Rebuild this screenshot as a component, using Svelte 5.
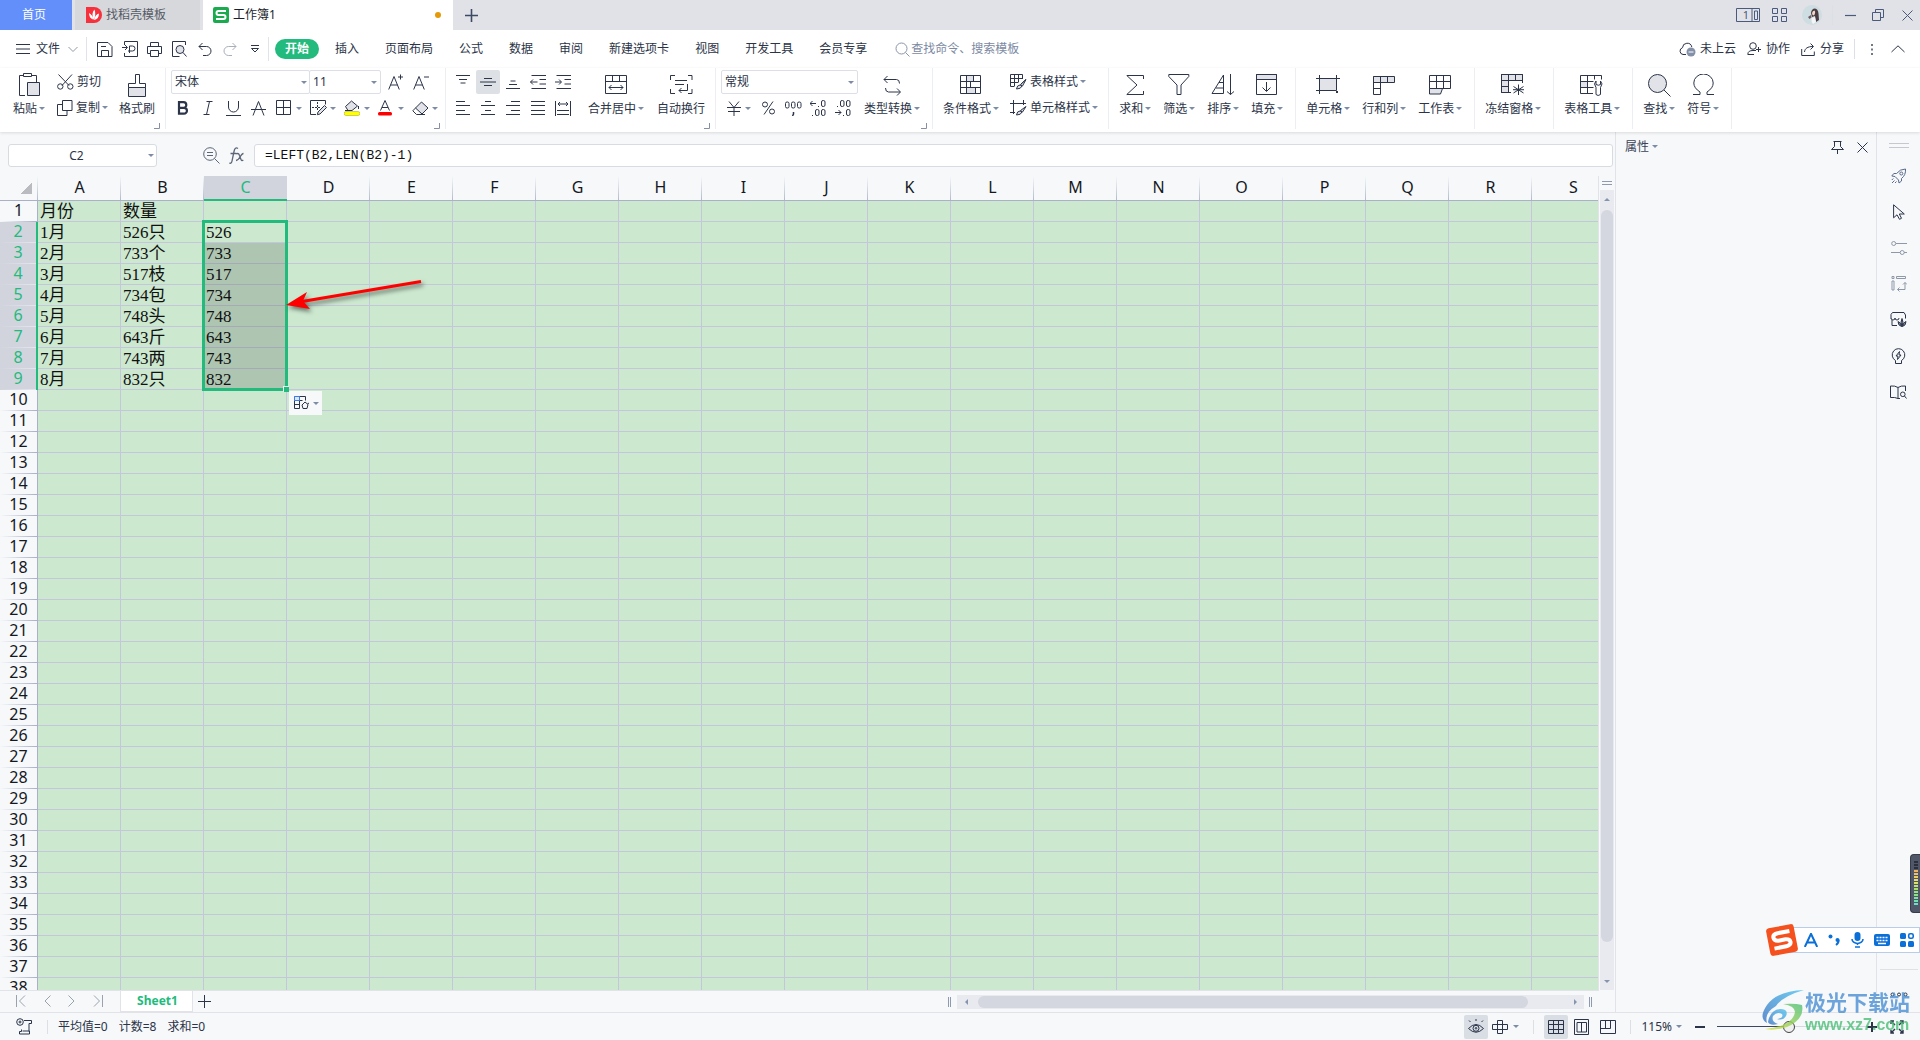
<script>
  const cols = 'ABCDEFGHIJKLMNOPQRS'.split('');
  const rowCount = 38;
  const data = {
    1: ['月份', '数量', ''],
    2: ['1月', '526只', '526'],
    3: ['2月', '733个', '733'],
    4: ['3月', '517枝', '517'],
    5: ['4月', '734包', '734'],
    6: ['5月', '748头', '748'],
    7: ['6月', '643斤', '643'],
    8: ['7月', '743两', '743'],
    9: ['8月', '832只', '832'],
  };
  const rows = Array.from({ length: rowCount }, (_, i) => i + 1);
  const selected = (r) => r >= 2 && r <= 9;

  const menus = ['插入', '页面布局', '公式', '数据', '审阅', '新建选项卡', '视图', '开发工具', '会员专享'];

  let fontName = $state('宋体');
  let fontSize = $state('11');
  let numberFormat = $state('常规');
  let cellName = $state('C2');
  let formula = $state('=LEFT(B2,LEN(B2)-1)');
  let zoom = $state(48);

  const quick = [
    ['save', '保存'],
    ['export', '输出为PDF'],
    ['print', '打印'],
    ['preview', '打印预览'],
    ['undo', '撤销'],
    ['redo', '恢复'],
    ['more', '自定义快速访问工具栏'],
  ];
  const sideIcons = [
    ['rocket', '稻壳资源'],
    ['cursor', '选择'],
    ['sliders', '属性'],
    ['pivot', '透视表'],
    ['shop', '素材库'],
    ['bulb', '技巧'],
    ['book', '帮助'],
  ];
  const alignTop = ['alTop', 'alMid', 'alBot', 'dedent', 'indent'];
  const alignBottom = ['alLeft', 'alCenter', 'alRight', 'alJust', 'alDist'];

  const icons = {
    burger: [14, 10, '<path d="M0 .5h14M0 5h14M0 9.500h14"/>'],
    chevDown: [10, 7, '<path d="M.5 1l4.500 4.500 4.500-4.500" stroke="#9098a6"/>'],
    save: [16, 15, '<path d="M.5.500h10.500l4 4v10H.5zM4.500 14V8.500h7V14M4 4.500h5"/>'],
    export: [16, 16, '<path d="M2.500 4V.5h13v15h-13V12M0 6.500h5M3 4l2.500 2.500L3 9M7.500 12V5h3a2 2 0 010 5H6"/>'],
    print: [15, 15, '<path d="M3.500 4.500v-4h8v4M3.500 11.500h-3v-7h14v7h-3M3.500 8.500h8v6h-8z"/>'],
    preview: [15, 16, '<path d="M13.500 4V.5H.5v15h7"/><circle cx="8" cy="8.500" r="4" fill="#e1e3e8"/><path d="M11 11.500l3.500 4"/>'],
    undo: [14, 14, '<path d="M1 4.500h7.500a4.500 4.500 0 010 9H5M4.500 1L1 4.500 4.500 8"/>'],
    redo: [14, 14, '<path d="M13 4.500H5.500a4.500 4.500 0 000 9H9M9.500 1L13 4.500 9.500 8" stroke="#a9afba"/>'],
    more: [8, 8, '<path d="M0 .5h8M.5 3.500h7L4 7z"/>'],
    search: [15, 15, '<circle cx="6.500" cy="6.500" r="5.500" stroke="#8a96ab"/><path d="M10.500 10.500l4 4" stroke="#8a96ab"/>'],
    cloud: [17, 15, '<path d="M7 12.500H4a3.500 3.500 0 01-.5-6.800 4.700 4.700 0 019.300-.7"/><circle cx="12" cy="10" r="4.500" fill="#8490a8" stroke="none"/><path d="M9.500 10h5" stroke="#fff"/>'],
    people: [15, 14, '<circle cx="6" cy="4" r="3.300"/><path d="M7 12.500H.8c0-3 2-4 5.200-4h3M11.500 5v5M9 7.500h5"/>'],
    share: [15, 13, '<path d="M.7 6v6.500h12.600V8.500M3.500 9c.3-3.500 3-5.500 8.500-5.500M9.500.5l3 3-3 3"/>'],
    dots: [2, 13, '<path d="M1 1v2M1 5.500v2M1 10v2" stroke="#70798a" stroke-width="2"/>'],
    chevUp: [14, 8, '<path d="M.5 7L7 .8 13.500 7"/>'],
    paste: [22, 24, '<path d="M7 22.500H1.500v-20H5M14 2.500h4.500V9M5.500.5h8v3h-8z"/><path d="M9.500 9.500h12v13h-12z" fill="#e1e3e8"/>'],
    cut: [17, 16, '<path d="M1.500.5l10.500 11M15 .5L5 11.500"/><circle cx="3.300" cy="12.500" r="2.700"/><circle cx="13.300" cy="12.500" r="2.700"/>'],
    copy: [16, 16, '<path d="M5.500.5h9.500v10H5.500zM5 4.500H.5v11H10v-5"/>'],
    brush: [19, 25, '<path d="M7.500 10.500V1.500h4v9h6v4h-17v-4z"/><path d="M.5 14.500h17v9H.5z" fill="#e1e3e8"/>'],
    fontUp: [16, 16, '<path d="M.7 15.500L6 2.500l5.300 13M2.500 11h7M12.500.5v5M10 3h5" />'],
    fontDown: [16, 16, '<path d="M.7 15.500L6 2.500l5.300 13M2.500 11h7M11 3h5" />'],
    bold: [12, 14, '<path d="M2 1.200h4.500a2.800 2.800 0 010 5.600H2zM2 6.800h5a2.900 2.900 0 010 5.900H2z" stroke-width="2.200"/>'],
    italic: [10, 14, '<path d="M3.500.5h6M.5 13.500h6M6.500.5l-3 13"/>'],
    underline: [15, 15, '<path d="M2.500 0v6a5 5 0 0010 0V0M0 14.500h15"/>'],
    strikeA: [15, 15, '<path d="M2 14.500L7.500.5 13 14.500M0 8.500h15"/>'],
    border: [16, 16, '<path d="M.5.500h14v14H.5zM7.500.5v14M.5 7.500h14"/>'],
    drawBorder: [17, 16, '<path d="M15.500 4.500v-4H.5v14H6"/><path d="M7.500 2v9M2 7.500h9" stroke-dasharray="2 1"/><path d="M14.500 5.500l2 2-6.500 6.500-2.700.7.700-2.700z" fill="#e1e3e8"/>'],
    fill: [16, 16, '<path d="M1.500 6.500L7.500 1l6 5-5.500 4.500H4z" fill="#e1e3e8"/><path d="M14.500 6v3M1 10.500h4"/><rect x="0" y="11.500" width="16" height="4" rx="2" fill="#ff0" stroke="#9a9a3a" stroke-width=".5"/>'],
    fontColor: [14, 16, '<path d="M2.500 10.500L7 .5l4.500 10M4 7.500h6"/><rect x="0" y="12" width="14" height="3.500" rx="1.500" fill="#f00" stroke="none"/>'],
    eraser: [17, 15, '<path d="M9.500 1L16 7l-6 6L3.500 7z" fill="#e1e3e8"/><path d="M3.500 7L.8 9.800l3.700 3.700H9l1-.5M9 13.500h4"/>'],
    alTop: [14, 14, '<path d="M0 .5h14M3 4.500h8M4.500 8h5"/>'],
    alMid: [16, 14, '<path d="M4 3.500h8M0 7h16M4 10.500h8"/>'],
    alBot: [14, 14, '<path d="M4.500 6h5M3 9.500h8M0 13.500h14"/>'],
    dedent: [16, 14, '<path d="M1.500.5H16M9.500 4.500H16M9.500 9H16M1.500 13.500H16M.5 7h7M3 4.500L.5 7 3 9.500"/>'],
    indent: [16, 14, '<path d="M1.500.5H16M9.500 4.500H16M9.500 9H16M1.500 13.500H16M0 7h6M4 4.500L6.500 7 4 9.500"/>'],
    alLeft: [14, 14, '<path d="M0 .5h9M0 4.500h14M0 9.500h9M0 13.500h14"/>'],
    alCenter: [14, 14, '<path d="M4 .5h6M0 4.500h14M4 9.500h6M0 13.500h14"/>'],
    alRight: [14, 14, '<path d="M5 .5h9M0 4.500h14M5 9.500h9M0 13.500h14"/>'],
    alJust: [14, 14, '<path d="M0 .5h14M0 4.500h14M0 9.500h14M0 13.500h14"/>'],
    alDist: [16, 15, '<path d="M.5 0v15M15.500 0v15M3 3h10M5 1L3 3l2 2M11 1l2 2-2 2M2 9.500h12M2 13.500h12"/>'],
    merge: [23, 20, '<path d="M.5.500h21v18H.5zM.5 6.500h21M7.500.5v6M14.500.5v6M4 12.500h14M6.500 10L4 12.500 6.500 15M15.500 10l2.500 2.500-2.500 2.500"/>'],
    wrap: [23, 20, '<path d="M5 .5H.5V5M18 .5h4V5M5 18.500H.5V14M18 18.500h4V14M5 5.500h12M5 9.500h9M17.500 9v6.500H9M11.500 13L9 15.500l2.500 2.500"/>'],
    convert: [19, 21, '<path d="M4.500 1L1 4.500 4.500 8M1 4.500h12.500q3 0 3 4M14 13.500l3.500 3.500-3.500 3.500M17 17H5.500q-3 0-3-4"/>'],
    yen: [14, 15, '<path d="M2 .5l5 6 5-6M0 6.500h14M1 10.500h12M7 6.500V15"/>'],
    percent: [13, 14, '<circle cx="3" cy="3.500" r="2.500"/><circle cx="10" cy="10.500" r="2.500"/><path d="M11 .5L2 13.500"/>'],
    thousand: [17, 15, '<rect x=".5" y="1" width="3.500" height="6" rx="1.500"/><rect x="6.500" y="1" width="3.500" height="6" rx="1.500"/><rect x="12.500" y="1" width="3.500" height="6" rx="1.500"/><path d="M8.500 11v2l-1 2" stroke-width="1.500"/>'],
    decInc: [16, 17, '<path d="M0 3.500h6M2.500 1L0 3.500 2.500 6M8 6.500h1M2 15.500h1"/><rect x="11.500" y=".5" width="3.500" height="6" rx="1.500"/><rect x="5.500" y="9.500" width="3.500" height="6" rx="1.500"/><rect x="11.500" y="9.500" width="3.500" height="6" rx="1.500"/>'],
    decDec: [16, 17, '<path d="M0 12.500h6M3.500 10L6 12.500 3.500 15M2 6.500h1M8 15.500h1"/><rect x="5.500" y=".5" width="3.500" height="6" rx="1.500"/><rect x="11.500" y=".5" width="3.500" height="6" rx="1.500"/><rect x="11.500" y="9.500" width="3.500" height="6" rx="1.500"/>'],
    cond: [22, 20, '<path d="M6.500.5h7v6h-7zM6.500 12.500h9v6h-9z" fill="#e1e3e8"/><path d="M.5.500h20v18H.5zM.5 6.500h20M.5 12.500h20M6.500.5v18M13.500.5v6M10.500 6.500v6M15.500 12.500v6"/>'],
    tableStyle: [17, 16, '<path d="M4 12.500H.5V.5h12V5M.5 4.500h12M.5 8.500H8M4.500.5v12M8.500.5v8"/><path d="M16 5.500l-5 4.500M16 5.500l-3.500 6.500-2-1.500zM10 11q-3 0-3.500 4 4.500 0 5.500-3z" fill="#e1e3e8"/>'],
    cellStyle: [17, 16, '<path d="M3.500 0v14M0 3.500h16M13.500 0v5M0 12.500h5"/><path d="M16 6.500l-3.500 5.500-2-1.500zM10 11q-3 0-3.500 4 4.500 0 5.500-3z" fill="#e1e3e8"/>'],
    sum: [18, 21, '<path d="M17.500 4V.500H.8L11 10 .8 19.500h16.700V16"/>'],
    filter: [22, 22, '<path d="M.8.500h20v2L13 11v9.500H9V11L.8 2.500z"/>'],
    sort: [24, 22, '<path d="M12.500 1v18.500H1zM8 8.500h4.500M5 14h7.500M19.500 0v20.500M16 17.500l3.500 3 3.500-3"/>'],
    fillDown: [22, 22, '<path d="M.5.500h20v5H.5z" fill="#e1e3e8"/><path d="M.5.500h20v20H.5zM10.500 8v9M6.500 13.500l4 4 4-4"/>'],
    cells: [24, 20, '<path d="M3.500 3.500h17v12h-17z" fill="#e1e3e8"/><path d="M3.500 0v19M20.500 0v13M0 3.500h24M0 15.500h17"/><path d="M20 16h2v2h-2z" fill="#2b3448" stroke="none"/>'],
    rowcol: [22, 19, '<path d="M.5.500h21v6H.5z" fill="#e1e3e8"/><path d="M7.500.5v18h-7V.5M14.500.5v6M.5 6.500h7M.5 12.500h7"/>'],
    sheet: [23, 20, '<path d="M.5 13.500h13l-2 5.500H.5z" fill="#e1e3e8"/><path d="M.5 13.500V.5h21v13zM.5 6.500h21M7.500.5v13M14.500.5v13"/>'],
    freeze: [24, 22, '<path d="M.5.500h21v6h-14v12h-7z" fill="#e1e3e8"/><path d="M.5.500h21v6H.5zM7.500.5v18h-7V.5M14.500.5v6M.5 12.500h7M21.500 6v3M7 18.500h3"/><path d="M17.500 10.500V21M12.500 12.500l10 6.500M22.500 12.500l-10 6.500M12 15.700h11"/>'],
    tools: [24, 21, '<path d="M.5 6.500h7v6h-7z" fill="#e1e3e8"/><path d="M.5.500h21v4M.5.5v18H13M.5 6.500h13M.5 12.500h13M7.500.5v18M14.500.5v4"/><path d="M16 6q-3 2.500 0 6.500v7q2 2 4.500 0v-7q3-4 0-6.500v3.500q-2 1.500-4.500 0z" fill="#fff"/>'],
    find: [23, 23, '<circle cx="9.500" cy="9.500" r="9" fill="#e1e3e8"/><path d="M16 16l6.500 6.500"/>'],
    omega: [21, 22, '<path d="M0 20.500h7v-2.500Q.8 14 .8 9a9.700 9 0 0119.400 0q0 5-6.200 9v2.500h7"/>'],
    corner: [6, 6, '<path d="M5.500 0v5.500H0" stroke="#8790a3"/>'],
    magnify: [17, 17, '<circle cx="7" cy="7" r="6.300"/><path d="M11.500 11.500l5 5M4 5.500h6M4 8.500h6"/>'],
    fx: [16, 17, '<path d="M9 1.500Q6-.5 5 4.500L3 14Q2.500 17 .3 16M1.500 6.500h6M7.500 7q2-1.500 3 1.500l1.500 4q.7 1.800 2.300.5M14.500 6.500q-1.500 0-3.500 3.500t-4 3.500" stroke-width="1.300"/>'],
    pin: [13, 13, '<path d="M2.500.5h8M3.500.5v5L.5 8.500h12l-3-3v-5M6.500 9v4"/>'],
    close: [11, 11, '<path d="M.5.500l10 10M10.500.5l-10 10"/>'],
    plus: [13, 13, '<path d="M6.500 0v13M0 6.500h13"/>'],
    tabPlus: [13, 13, '<path d="M6.500 0v13M0 6.500h13" stroke-width="1.600"/>'],
    box1: [24, 14, '<path d="M.5.500h23v13H.5zM16 .5v13M18.500 3v8.500h3V3z" />'],
    apps: [15, 14, '<path d="M.5.500h5v5h-5zM9.500.5h5v5h-5zM.5 8.500h5v5h-5zM9.500 8.500h5v5h-5z"/>'],
    min: [11, 3, '<path d="M0 1.500h11" stroke-width="1.200"/>'],
    restore: [12, 12, '<path d="M.5 3.500h8v8h-8zM3.500 3.500v-3h8v8h-3"/>'],
    rocket: [16, 16, '<path d="M14.500 1Q9 1 5.500 5.500H2.800L.8 8l3.200.5 3.500 3.500.5 3 2.500-2v-2.500Q15 7 14.500 1zM1 15l2.500-2.500M.8 12l1.500-1.500M4 15l1.500-1.500" stroke="#5a6a8a"/><circle cx="10.300" cy="5.500" r="1.500" stroke="#5a6a8a"/>'],
    cursor: [12, 16, '<path d="M.6.800v13l3.400-3 2.500 4.500 2-1-2.200-4.300h5z"/>'],
    sliders: [16, 14, '<path d="M5 2.500h11M0 11.500h9M13 11.500h3" stroke="#8f98a8"/><circle cx="2.700" cy="2.500" r="2" stroke="#8f98a8"/><circle cx="11.200" cy="11.500" r="2" stroke="#8f98a8"/>'],
    pivot: [16, 16, '<path d="M1 .5h2v2H1zM5.500.5h9v2h-9zM1 5h2v9H1zM14 6.500v7H6.500M12 8.500l2-2 2 2M8.500 11.500l-2 2 2 2" stroke="#8f98a8"/>'],
    shop: [17, 16, '<path d="M1 6.500v-4l1.500-2H14L15.500 3v3.500M1 6a2 2 0 004 0 2 2 0 004 0M2 8v5.500h5"/><path d="M12 6.500q2 3.500 0 8-2-4.500 0-8zM8 9.500q3 1 3.500 5-3.500-1-3.500-5zM16 9.500q-3 1-3.500 5 3.500-1 3.500-5z" fill="#8790a3"/>'],
    bulb: [15, 16, '<path d="M4.500 12.500a6.300 6.300 0 116 0v3h-6zM8.500 3.500L5 8h2l-.5 3.500L10 7H8z"/>'],
    book: [17, 15, '<path d="M8 2.500Q5 .5.500 1v11.500Q5 12 8 13.500zM8 2.500Q11 .5 15.500 1v5M8 13.500h2"/><circle cx="12.800" cy="9.300" r="2.300"/><path d="M14.500 11l2 2.500"/>'],
    first: [10, 12, '<path d="M.5 0v12M9 .5L3.500 6 9 11.500" stroke="#9ba1ad"/>'],
    prev: [7, 12, '<path d="M6.500.5L1 6l5.500 5.500" stroke="#9ba1ad"/>'],
    next: [7, 12, '<path d="M.5.500L6 6 .5 11.500" stroke="#9ba1ad"/>'],
    last: [10, 12, '<path d="M9.500 0v12M1 .5L6.500 6 1 11.500" stroke="#9ba1ad"/>'],
    record: [16, 17, '<circle cx="4" cy="4" r="3.300"/><circle cx="4" cy="4" r="1"/><path d="M8 2.500h7.500v3H13v8M5.500 11.500v2h-2v2.500h10v-3h-7"/>'],
    eye: [16, 15, '<path d="M.5 9.500Q8 1.500 15.500 9.500 8 17 .5 9.500zM2.500 3L1 1.500M13.500 3L15 1.500M8 2V0"/><circle cx="8" cy="9.300" r="3"/><circle cx="8" cy="9.300" r=".8"/>'],
    reading: [16, 14, '<path d="M5.500.500h5v13h-5zM.5 4.500h15v5H.5z"/>'],
    viewNormal: [16, 14, '<path d="M.5.500h15v13H.5zM.5 4.500h15M.5 9.500h15M5.500.5v13M10.500.5v13"/>'],
    viewPage: [15, 16, '<path d="M.5.500h14v15H.5zM3 3.500h9.500v9.500H3zM7.500 3.500V13"/>'],
    viewBreak: [16, 14, '<path d="M.5.500h15v13H.5zM.5 8.500h10v-8M5.500.5v8"/>'],
    minus: [10, 2, '<path d="M0 1h10" stroke-width="2"/>'],
    zoomIn: [10, 10, '<path d="M0 5h10M5 0v10" stroke-width="2"/>'],
    full: [14, 14, '<path d="M1 4V1h3M10 1h3v3M13 10v3h-3M4 13H1v-3M1 1l4 4M13 1L9 5M13 13L9 9M1 13l4-4" stroke-width="1.400"/>'],
    trio: [18, 5, '<circle cx="2.500" cy="2.500" r="1.500"/><circle cx="9" cy="2.500" r="1.500"/><circle cx="15.500" cy="2.500" r="1.500"/>'],
    fillOpt: [16, 14, '<path d="M.5.500h11v4M.5 8.500h5M.5 4.500v8h5M5.500.5v12M.5 4.500h8"/><path d="M.5.500h5v4h-5z" stroke="#3d7be0" fill="#d9e6ff"/><path d="M8 9l3-3 3 2.500-1 4H9zM13.500 8l1.500-1"/>'],
    imeA: [14, 14, '<path d="M.8 14L7 .8 13.200 14M3 9.500h8" stroke="#0b6fd8" stroke-width="2"/>'],
    imeComma: [13, 12, '<circle cx="2.500" cy="2.500" r="2" fill="#0b6fd8" stroke="none"/><circle cx="9.500" cy="6" r="2" fill="#0b6fd8" stroke="none"/><path d="M10.500 6q.5 3-2.500 5" stroke="#0b6fd8" stroke-width="2"/>'],
    imeMic: [13, 16, '<rect x="3.500" y="0" width="6" height="9" rx="3" fill="#0b6fd8" stroke="none"/><path d="M1 7a5.500 4.500 0 0011 0M6.500 12v1M4 15h5" stroke="#0b6fd8" stroke-width="1.600"/>'],
    imeKey: [16, 12, '<rect width="16" height="12" rx="2" fill="#0b6fd8" stroke="none"/><path d="M2.500 3.500h11M2.500 6.500h11" stroke="#fff" stroke-width="1.600" stroke-dasharray="2 1"/><path d="M4 9.500h8" stroke="#fff" stroke-width="1.500"/>'],
    imeGrid: [14, 14, '<rect width="6" height="6" rx="1.500" fill="#0b6fd8" stroke="none"/><rect x="8.700" y=".8" width="4.500" height="4.500" rx="1.500" stroke="#0b6fd8" stroke-width="1.600"/><rect y="8" width="6" height="6" rx="1.500" fill="#0b6fd8" stroke="none"/><rect x="8" y="8" width="6" height="6" rx="1.500" fill="#0b6fd8" stroke="none"/>'],
  };
</script>

{#snippet ic(name)}
  <svg class="ic" width={icons[name][0]} height={icons[name][1]} viewBox="0 0 {icons[name][0]} {icons[name][1]}" aria-hidden="true">{@html icons[name][2]}</svg>
{/snippet}

{#snippet big(icon, label, caret = true)}
  <button class="big">
    <span class="big-icon">{@render ic(icon)}</span>
    <span class="label">{label}{#if caret}<i class="caret"></i>{/if}</span>
  </button>
{/snippet}

{#snippet small(icon, label, caret = false)}
  <button class="small">{@render ic(icon)}<span class="label">{label}{#if caret}<i class="caret"></i>{/if}</span></button>
{/snippet}

<div class="app">
  <header class="titlebar">
    <button class="tab home">首页</button>
    <button class="tab docer">
      <svg width="16" height="16" viewBox="0 0 16 16" aria-hidden="true"><path d="M0 0h8a8 8 0 010 16H0z" fill="#f6303c" /><path d="M7.500 13Q5 6 8.500 2.500 10.500 8 7.500 13zM3 6q4 2 4 6.500Q3 11 3 6zM13 6.500q-4 1-5 6.500 5-1 5-6.500z" fill="#fff" /></svg>
      找稻壳模板
    </button>
    <button class="tab book">
      <svg width="16" height="16" viewBox="0 0 16 16" aria-hidden="true"><rect width="16" height="16" rx="2" fill="#1bab4f" /><path d="M13 4H5.500Q3.500 4 3.500 6t2 2h5q2 0 2 2t-2 2H3" fill="none" stroke="#fff" stroke-width="2" /></svg>
      <span>工作簿1</span>
      <span class="dirty"></span>
    </button>
    <button class="newtab" aria-label="新建">{@render ic('tabPlus')}</button>
    <div class="window">
      <button class="devices" aria-label="窗口">{@render ic('box1')}<span>1</span></button>
      <button aria-label="应用">{@render ic('apps')}</button>
      <button class="avatar" aria-label="账号">
        <svg width="20" height="20" viewBox="0 0 20 20"><circle cx="10" cy="10" r="10" fill="#cddde2" /><path d="M9 8q.5-4.500 4-4.500 3 .5 3.500 5L17 15l-3 2-1-6-3 1z" fill="#4a3c42" /><path d="M10 8q.5-2.500 2.500-2.500 1.500 2-.5 5-2 0-2-2.500z" fill="#f2d9ce" /><path d="M6 12l3-2 .5 2.500-2 1.500z" fill="#6e5a5e" /><path d="M9.500 13l3.500-1 1 5-3 2q-2-2-1.500-6z" fill="#f3f5f6" /></svg>
      </button>
      <span class="vline"></span>
      <button aria-label="最小化">{@render ic('min')}</button>
      <button aria-label="还原">{@render ic('restore')}</button>
      <button aria-label="关闭">{@render ic('close')}</button>
    </div>
  </header>

  <nav class="menubar">
    <button class="file">{@render ic('burger')}<span>文件</span>{@render ic('chevDown')}</button>
    <div class="quick">
      {#each quick as [icon, label]}
        <button aria-label={label}>{@render ic(icon)}</button>
      {/each}
    </div>
    <div class="menus">
      <button class="active">开始</button>
      {#each menus as m}<button>{m}</button>{/each}
    </div>
    <label class="search">{@render ic('search')}<input placeholder="查找命令、搜索模板" /></label>
    <div class="account">
      <button>{@render ic('cloud')}未上云</button>
      <button>{@render ic('people')}协作</button>
      <button>{@render ic('share')}分享</button>
      <span class="vline"></span>
      <button aria-label="更多">{@render ic('dots')}</button>
      <button aria-label="收起功能区">{@render ic('chevUp')}</button>
    </div>
  </nav>

  <section class="ribbon">
    <div class="group clipboard">
      {@render big('paste', '粘贴')}
      <div class="stack">
        {@render small('cut', '剪切')}
        {@render small('copy', '复制', true)}
      </div>
      {@render big('brush', '格式刷', false)}
      <span class="launcher">{@render ic('corner')}</span>
    </div>
    <div class="group font">
      <div class="stack">
        <div class="line">
          <span class="combo name"><select aria-label="字体" bind:value={fontName}><option>宋体</option></select><i class="caret"></i></span>
          <span class="combo size"><select aria-label="字号" bind:value={fontSize}><option>11</option></select><i class="caret"></i></span>
          <button class="tool grow" aria-label="增大字号">{@render ic('fontUp')}</button>
          <button class="tool" aria-label="减小字号">{@render ic('fontDown')}</button>
        </div>
        <div class="line">
          {#each ['bold', 'italic', 'underline', 'strikeA'] as t}
            <button class="tool" aria-label={t}>{@render ic(t)}</button>
          {/each}
          {#each ['border', 'drawBorder', 'fill', 'fontColor', 'eraser'] as t}
            <button class="tool drop" aria-label={t}><span>{@render ic(t)}</span><i class="caret"></i></button>
          {/each}
        </div>
      </div>
      <span class="launcher">{@render ic('corner')}</span>
    </div>
    <div class="group align">
      <div class="stack">
        <div class="line">
          {#each alignTop as t}<button class="tool" class:on={t === 'alMid'} aria-label={t}>{@render ic(t)}</button>{/each}
        </div>
        <div class="line">
          {#each alignBottom as t}<button class="tool" aria-label={t}>{@render ic(t)}</button>{/each}
        </div>
      </div>
      {@render big('merge', '合并居中')}
      {@render big('wrap', '自动换行', false)}
      <span class="launcher">{@render ic('corner')}</span>
    </div>
    <div class="group number">
      <div class="stack">
        <div class="line">
          <span class="combo format"><select aria-label="数字格式" bind:value={numberFormat}><option>常规</option></select><i class="caret"></i></span>
        </div>
        <div class="line">
          <button class="tool drop yen" aria-label="货币"><span>{@render ic('yen')}</span><i class="caret"></i></button>
          {#each ['percent', 'thousand', 'decInc', 'decDec'] as t}
            <button class="tool" aria-label={t}>{@render ic(t)}</button>
          {/each}
        </div>
      </div>
      {@render big('convert', '类型转换')}
      <span class="launcher">{@render ic('corner')}</span>
    </div>
    <div class="group styles">
      {@render big('cond', '条件格式')}
      <div class="stack">
        {@render small('tableStyle', '表格样式', true)}
        {@render small('cellStyle', '单元格样式', true)}
      </div>
    </div>
    <div class="group">
      {@render big('sum', '求和')}
      {@render big('filter', '筛选')}
      {@render big('sort', '排序')}
      {@render big('fillDown', '填充')}
    </div>
    <div class="group">
      {@render big('cells', '单元格')}
      {@render big('rowcol', '行和列')}
      {@render big('sheet', '工作表')}
    </div>
    <div class="group">{@render big('freeze', '冻结窗格')}</div>
    <div class="group">{@render big('tools', '表格工具')}</div>
    <div class="group">
      {@render big('find', '查找')}
      {@render big('omega', '符号')}
    </div>
  </section>

  <div class="body">
    <main class="work">
      <div class="formulabar">
        <label class="namebox"><input aria-label="名称框" bind:value={cellName} /><i class="caret"></i></label>
        <button class="fbtn" aria-label="浏览公式结果">{@render ic('magnify')}</button>
        <button class="fbtn" aria-label="插入函数">{@render ic('fx')}</button>
        <input class="formula" aria-label="编辑栏" bind:value={formula} />
      </div>

      <div class="sheetarea">
        <div class="viewport">
          <div class="sheet">
            <table>
              <thead>
                <tr>
                  <th class="all"><span></span></th>
                  {#each cols as c}<th class:cur={c === 'C'}>{c}</th>{/each}
                </tr>
              </thead>
              <tbody>
                {#each rows as r}
                  <tr>
                    <th class:sel={selected(r)}>{r}</th>
                    {#each cols as c, i}
                      <td class:shade={i === 2 && r >= 3 && r <= 9}>{data[r]?.[i] ?? ''}</td>
                    {/each}
                  </tr>
                {/each}
              </tbody>
            </table>
            <div class="selection"><span></span></div>
            <button class="fillopt" aria-label="自动填充选项">{@render ic('fillOpt')}<i class="caret"></i></button>
            <svg class="arrow" width="150" height="50" viewBox="0 0 150 50" aria-hidden="true">
              <path d="M141 11.500L22 31.500" stroke="#f00" stroke-width="3" />
              <path d="M6 35l21-13-4 9 7 8z" fill="#f00" />
            </svg>
          </div>
        </div>
        <div class="vscroll">
          <span class="split"></span>
          <div class="vtrack"><i class="up"></i><span class="vthumb"></span><i class="down"></i></div>
        </div>
      </div>

      <div class="sheetbar">
        <div class="sheetnav">
          <button aria-label="第一张">{@render ic('first')}</button>
          <button aria-label="上一张">{@render ic('prev')}</button>
          <button aria-label="下一张">{@render ic('next')}</button>
          <button aria-label="最后一张">{@render ic('last')}</button>
        </div>
        <button class="sheettab">Sheet1</button>
        <button class="addsheet" aria-label="新建工作表">{@render ic('plus')}</button>
        <div class="hscroll">
          <span class="bars"></span>
          <div class="htrack"><i class="left"></i><span class="hthumb"></span><i class="right"></i></div>
          <span class="bars"></span>
        </div>
      </div>
    </main>

    <aside class="panel">
      <div class="panelhead">
        <button class="label">属性<i class="caret"></i></button>
        <button class="pin" aria-label="固定">{@render ic('pin')}</button>
        <button aria-label="关闭属性">{@render ic('close')}</button>
      </div>
    </aside>

    <aside class="rail">
      <span class="handle"></span>
      {#each sideIcons as [icon, label]}
        <button aria-label={label}>{@render ic(icon)}</button>
      {/each}
      <span class="railend"><button aria-label="更多工具">{@render ic('trio')}</button></span>
    </aside>
  </div>

  <footer class="status">
    <button class="rec" aria-label="录制">{@render ic('record')}</button>
    <span class="vline"></span>
    <div class="stats"><span>平均值=0</span><span>计数=8</span><span>求和=0</span></div>
    <div class="views">
      <button class="on" aria-label="护眼模式">{@render ic('eye')}</button>
      <button class="reading" aria-label="阅读模式">{@render ic('reading')}<i class="caret"></i></button>
      <span class="vline"></span>
      <button class="on" aria-label="普通视图">{@render ic('viewNormal')}</button>
      <button class="vp" aria-label="页面布局">{@render ic('viewPage')}</button>
      <button class="vb" aria-label="分页预览">{@render ic('viewBreak')}</button>
      <span class="vline"></span>
      <button class="pct">115%<i class="caret"></i></button>
      <button class="zo" aria-label="缩小">{@render ic('minus')}</button>
      <input type="range" aria-label="缩放" min="0" max="100" bind:value={zoom} />
      <button class="zi" aria-label="放大">{@render ic('zoomIn')}</button>
      <button class="fs" aria-label="全屏">{@render ic('full')}</button>
    </div>
  </footer>

  <div class="gauge"><span></span></div>

  <div class="ime">
    <svg class="sogou" width="32" height="32" viewBox="0 0 32 32" aria-hidden="true">
      <g transform="rotate(-11 16 16)"><rect x="2" y="2" width="28" height="28" rx="3" fill="#f4511e" /><path d="M25 8.500H13q-5 0-5 3.500t4.500 4h7q4.500.500 4.500 3.500t-5 3.500H7" fill="none" stroke="#fff" stroke-width="4" /></g>
    </svg>
    {#each ['imeA', 'imeComma', 'imeMic', 'imeKey', 'imeGrid'] as t}
      <button aria-label={t}>{@render ic(t)}</button>
    {/each}
  </div>

  <div class="watermark">
    <svg width="44" height="42" viewBox="0 0 44 42" aria-hidden="true">
      <defs>
        <linearGradient id="wb" x1="1" y1="0" x2="0" y2="1"><stop offset="0" stop-color="#4fc3f0" /><stop offset="1" stop-color="#3c74c4" /></linearGradient>
        <linearGradient id="wg" x1="1" y1="0" x2="0" y2="1"><stop offset="0" stop-color="#4cc07a" /><stop offset="1" stop-color="#d8e03a" /></linearGradient>
      </defs>
      <path d="M43 1Q16 2 6 16 -3 29 6 34q-3-10 9-17Q22 7 43 1z" fill="url(#wb)" />
      <path d="M22 15Q34 14 41 16q3 14-15 22Q14 42 4 40q28-3 30-17 0-6-12-8z" fill="url(#wg)" />
      <path d="M7 33q2-12 12-13 9 0 6 7-3 5-9 3 7-1 5-5-5-3-9 2-2 6 5 8-8 2-10-2z" fill="url(#wb)" />
    </svg>
    <div class="wtext"><span>极光下载站</span><span class="url">www.xz7.com</span></div>
  </div>
</div>

<style>
  :global(body) { overflow: hidden; }
  .app {
    --ink: #2b3448;
    --line: #e1e3e8;
    --green: #22bb7d;
    position: relative;
    display: flex;
    flex-direction: column;
    height: 100vh;
    font: 12px/16px "Noto Sans", "Noto Sans CJK SC", sans-serif;
    color: var(--ink);
    background: #f6f8fa;
    overflow: hidden;
  }
  button, input, select { font: inherit; color: inherit; background: none; border: 0; padding: 0; margin: 0; outline: 0; white-space: nowrap; }
  .ic { display: block; flex: none; fill: none; stroke: currentColor; stroke-width: 1; }
  .caret { display: inline-block; flex: none; border: 3px solid transparent; border-top: 3px solid #7e8ba5; border-bottom: 0; }
  .label .caret { margin-bottom: 2px; }
  .vline { width: 1px; height: 20px; background: #dcdfe4; }

  /* title bar */
  .titlebar { display: flex; height: 30px; background: #e1e2e7; flex: none; align-items: stretch; }
  .tab { display: flex; align-items: center; }
  .tab svg { flex: none; }
  .home { width: 72px; justify-content: center; padding-right: 4px; background: #628ffa; color: #fff; }
  .docer { width: 125px; margin-left: 3px; padding-left: 11px; gap: 4px; background: #d7d8dc; color: #555b66; }
  .book { width: 250px; margin-left: 3px; padding: 0 12px 0 10px; gap: 4px; background: #fff; color: #1a1f2b; }
  .dirty { width: 6px; height: 6px; border-radius: 50%; background: #e59a08; margin-left: auto; }
  .newtab { width: 36px; display: grid; place-items: center; color: #3d4a66; }
  .window { display: flex; align-items: center; margin-left: auto; padding-right: 7px; color: #4a5a7c; }
  .window button { display: grid; place-items: center; }
  .devices { margin-right: 12px; }
  .devices > :global(*) { grid-area: 1 / 1; }
  .devices span { padding-right: 4px; font-size: 11px; }
  .avatar { margin-left: 15px; margin-right: 10px; }
  .window .vline + button { margin-left: 12px; }
  .window .vline + button + button { margin: 0 18px 0 16px; }

  /* menu row */
  .menubar { display: flex; align-items: center; height: 38px; background: #fff; flex: none; }
  .menubar button { display: flex; align-items: center; }
  .file { gap: 6px; padding: 0 8px 0 16px; height: 24px; }
  .file span { margin-right: 2px; }
  .quick { display: grid; grid-template-columns: repeat(7, 25px); width: 175px; padding: 0 1px 0 5px; height: 24px; border-left: 1px solid var(--line); border-right: 1px solid var(--line); }
  .quick button { justify-content: center; }
  .menus { display: flex; align-items: center; gap: 26px; padding-left: 6px; }
  .menus .active { height: 20px; padding: 0 10px; border-radius: 10px; background: var(--green); color: #fff; font-weight: 700; margin-right: -10px; }
  .search { display: flex; align-items: center; gap: 1px; margin-left: 28px; }
  .search input { width: 140px; }
  .search input::placeholder { color: #7c89a3; opacity: 1; }
  .account { display: flex; align-items: center; margin-left: auto; padding-right: 15px; gap: 11px; }
  .account button { gap: 4px; }
  .account .vline { margin: 0 5px 0 -1px; }
  .account .vline + button { margin-right: 7px; }

  /* ribbon */
  .ribbon { display: flex; height: 64px; background: #fff; flex: none; box-shadow: 0 1px 3px #0000001f; z-index: 1; }
  .group { position: relative; display: flex; gap: 12px; height: 61px; padding: 0 12px 0 10px; border-right: 1px solid #eceef1; }
  .big { display: flex; flex-direction: column; align-items: center; }
  .big-icon { display: grid; place-items: center; height: 32px; margin-top: 1px; }
  .label { display: flex; align-items: center; gap: 2px; height: 16px; }
  .stack { display: flex; flex-direction: column; gap: 2px; padding-top: 2px; }
  .line { display: flex; align-items: center; height: 24px; gap: 1px; }
  .small { display: flex; align-items: center; gap: 3px; height: 24px; }
  .tool { display: grid; place-items: center; width: 24px; height: 24px; border-radius: 2px; }
  .tool.on { background: #dde1e6; }
  .drop { display: flex; width: 33px; gap: 3px; padding-left: 5px; }
  .drop span { width: 17px; }
  .launcher { position: absolute; right: 5px; bottom: 0; }
  .clipboard { padding: 0 10px 0 13px; gap: 11px; }
  .clipboard .stack { padding-left: 1px; }
  .font { padding: 0 5px; }
  .combo { position: relative; display: flex; align-items: center; height: 24px; box-sizing: border-box; border: 1px solid #dcdfe5; border-radius: 2px; background: #fff; }
  .combo select { appearance: none; width: 100%; height: 22px; padding-left: 3px; }
  .combo .caret { position: absolute; right: 2px; pointer-events: none; }
  .combo.name { width: 139px; }
  .combo.size { width: 72px; margin-left: -2px; }
  .combo.size .caret { right: 3px; }
  .grow { margin-left: 2px; }
  .align { padding: 0 10px 0 5px; gap: 13px; }
  .number { padding: 0 12px 0 5px; gap: 6px; }
  .styles { padding-right: 10px; gap: 11px; }
  .combo.format { width: 137px; }
  .combo.format .caret { right: 3px; }
  .yen { width: 34px; padding-left: 6px; gap: 1px; }

  /* work area */
  .body { display: flex; flex: 1; min-height: 0; }
  .work { display: flex; flex-direction: column; flex: 1; min-width: 0; }
  .formulabar { display: flex; align-items: center; flex: none; padding: 12px 2px 9px 8px; }
  .namebox { position: relative; display: flex; align-items: center; width: 149px; height: 23px; box-sizing: border-box; border: 1px solid #d8dbe2; border-radius: 3px; background: #fff; margin-right: 46px; }
  .namebox input { width: 100%; padding-right: 12px; text-align: center; }
  .namebox .caret { position: absolute; right: 2px; }
  .fbtn { color: #5d6678; margin-right: 9px; }
  .formula { flex: 1; height: 23px; box-sizing: border-box; border: 1px solid #d8dbe2; border-radius: 3px; background: #fff; padding-left: 10px; font: 13px/20px "Liberation Mono", monospace; color: #111; }

  .sheetarea { display: flex; flex: 1; min-height: 0; }
  .viewport { flex: 1; min-width: 0; overflow: hidden; border-right: 1px solid var(--line); border-bottom: 1px solid var(--line); }
  .sheet { position: relative; }
  table { table-layout: fixed; width: 1615px; border-spacing: 0; }
  th, td { box-sizing: border-box; padding: 0; width: 83px; overflow: hidden; white-space: nowrap; vertical-align: top; }
  thead th { height: 25px; font: 16px/23px "Noto Sans", sans-serif; color: #15181f; border-bottom: 1px solid #a9b0c8; background: linear-gradient(#f6f8fa, #b4bbcd) right / 1px 100% no-repeat; }
  thead th.cur { background: #d1d4dc; color: var(--green); border-bottom: 2px solid var(--green); }
  th.all { width: 38px; }
  .all span { display: block; width: 12px; height: 12px; margin: 6px 0 0 20px; background: linear-gradient(135deg, transparent 50%, #b9bbc0 50%); }
  tbody th { width: 38px; height: 21px; font: 16px/19px "Noto Sans", sans-serif; color: #15181f; border-right: 1px solid #a9b0c8; background: linear-gradient(90deg, #f6f8fa, #a9b0c8) bottom / 100% 1px no-repeat; }
  tbody th.sel { background: linear-gradient(90deg, #d1d4dc, #e4e6ee) bottom / 100% 1px no-repeat #d1d4dc; color: var(--green); border-right: 2px solid var(--green); }
  td { height: 21px; padding: 2px 0 0 2px; font: 17px/18px "Liberation Serif", "Noto Sans CJK SC", sans-serif; color: #111; background: #cce8cf; border-right: 1px solid #c4c7dc; border-bottom: 1px solid #c4c7dc; }
  td.shade { background: #aec5b1; border-bottom-color: #a6a9b8; }
  .selection { position: absolute; left: 202px; top: 44px; width: 86px; height: 171px; box-sizing: border-box; border: 3px solid var(--green); }
  .selection span { position: absolute; right: -4px; bottom: -4px; width: 5px; height: 5px; background: var(--green); border: 1px solid #e8f5ea; border-right: 0; border-bottom: 0; }
  .fillopt { position: absolute; left: 289px; top: 215px; width: 33px; height: 24px; display: flex; align-items: center; gap: 3px; padding-left: 5px; background: #f6f8fa; }
  .arrow { position: absolute; left: 280px; top: 94px; filter: drop-shadow(2px 3px 2px #00000080); }

  .vscroll { display: flex; flex-direction: column; width: 15px; padding: 5px 1px 1px 0; align-items: flex-end; }
  .split { width: 10px; height: 2px; margin-right: 2px; border-top: 1px solid #8f9ab0; border-bottom: 1px solid #8f9ab0; }
  .vtrack { display: flex; flex-direction: column; align-items: center; flex: 1; width: 14px; margin-top: 5px; background: #e8eaef; }
  .vtrack i, .htrack i { flex: none; border: 3px solid transparent; }
  .vtrack .up { border-bottom-color: #8794ae; margin: 5px 0 9px; }
  .vtrack .down { border-top-color: #8794ae; margin: 38px 0 4px; }
  .vthumb { flex: 1; width: 12px; border-radius: 6px; background: #d4d7df; }

  .sheetbar { display: flex; height: 22px; flex: none; border-bottom: 1px solid var(--line); }
  .sheetnav { display: flex; align-items: center; justify-content: space-between; width: 87px; padding: 0 17px 0 16px; }
  .sheettab { width: 73px; height: 21px; padding-left: 2px; background: #fff; border: 1px solid var(--line); border-top: 0; color: var(--green); font-weight: 700; }
  .sheetnav, .addsheet { margin-bottom: 1px; }
  .addsheet { margin-left: 5px; }
  .hscroll { display: flex; align-items: center; width: 644px; margin-left: auto; padding-right: 23px; }
  .bars { width: 1px; height: 10px; border-left: 1px solid #8f9ab0; border-right: 1px solid #8f9ab0; }
  .htrack { display: flex; align-items: center; flex: 1; height: 14px; margin: 0 5px 0 6px; background: #e8eaef; }
  .htrack .left { border-right-color: #8794ae; margin: 0 10px 0 5px; }
  .htrack .right { border-left-color: #8794ae; margin: 0 4px 0 46px; }
  .hthumb { flex: 1; height: 12px; border-radius: 6px; background: #d4d7df; }

  .panel { width: 261px; flex: none; border-left: 1px solid var(--line); }
  .panelhead { display: flex; align-items: center; height: 30px; padding: 0 8px 0 9px; }
  .panelhead .label { color: #3a4357; gap: 3px; }
  .pin { margin: 0 13px 0 auto; }
  .rail { display: flex; flex-direction: column; align-items: center; width: 44px; flex: none; border-left: 1px solid var(--line); }
  .handle { width: 20px; height: 3px; margin: 11px 0 10px; border-top: 1px solid #c5c8cf; border-bottom: 1px solid #c5c8cf; flex: none; }
  .rail button { display: grid; place-items: center; height: 36px; flex: none; }
  .railend { width: 38px; margin-top: auto; border-top: 1px solid #dfe1e6; padding-top: 6px; display: grid; place-items: center; }
  .sheetbar, .panel, .rail { box-sizing: border-box; }
  .panel, .rail { border-bottom: 1px solid var(--line); }

  /* status bar */
  .status { display: flex; align-items: center; height: 27px; flex: none; padding: 0 16px; }
  .status .vline { height: 14px; margin: 0 10px 0 15px; }
  .stats { display: flex; gap: 11px; }
  .views { display: flex; align-items: center; margin-left: auto; }
  .views button { display: flex; align-items: center; justify-content: center; }
  .views .on { width: 24px; height: 24px; border-radius: 2px; background: #d9dee5; }
  .reading { gap: 5px; margin-left: 4px; }
  .views .vline { margin: 0 10px 0 14px; }
  .views .vp { margin-left: 6px; }
  .vb { margin-left: 11px; }
  .pct { gap: 4px; }
  .zo { margin: 0 12px 0 13px; }
  input[type="range"] { appearance: none; width: 150px; height: 14px; }
  input[type="range"]::-webkit-slider-runnable-track { height: 12px; background: linear-gradient(90deg, #3d4760 50%, #d5d8e0 50%) center / 100% 1px no-repeat; }
  input[type="range"]::-webkit-slider-thumb { appearance: none; width: 12px; height: 12px; border-radius: 50%; border: 1px solid #444; background: #f0f0f0; box-sizing: border-box; }
  .fs { margin-left: 13px; }

  .gauge { position: absolute; right: 0; top: 854px; width: 10px; height: 59px; box-sizing: border-box; background: #4f5768; border: 1px solid #363c49; border-right: 0; border-radius: 4px 0 0 4px; padding: 6px 2px 6px 3px; }
  .gauge span { display: block; height: 100%; background: repeating-linear-gradient(transparent 0 2px, #4f5768 2px 3px), linear-gradient(#2a2f3a 20%, #f0b060 20%, #e8e070 45%, #a0e070 65%, #60e0d0); }

  .ime { position: absolute; right: 0; bottom: 87px; height: 26px; box-sizing: border-box; display: flex; align-items: center; gap: 10px; padding-right: 5px; background: #fff; border: 1px solid #b9cdea; }
  .sogou { margin-left: -16px; margin-right: -4px; }

  .watermark { position: absolute; right: 10px; bottom: 7px; display: flex; opacity: 0.8; pointer-events: none; }
  .wtext { display: flex; flex-direction: column; gap: 3px; font: 700 21px/24px "Noto Sans CJK SC", sans-serif; color: #4a8fd4; }
  .wtext .url { font: 700 16px/17px "Liberation Sans", sans-serif; color: #4cbf76; }
</style>
